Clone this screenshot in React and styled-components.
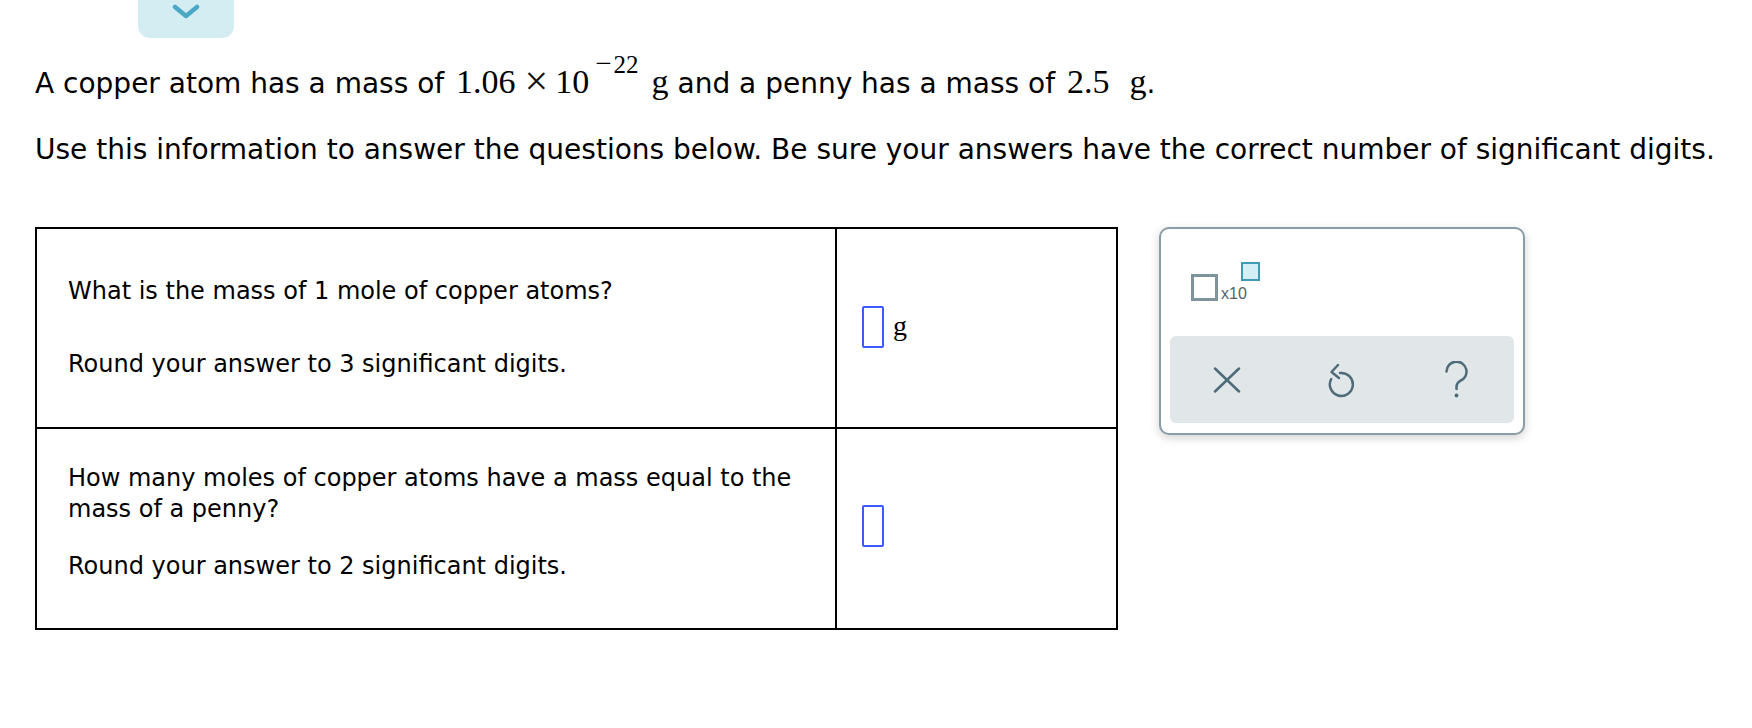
import React from "react";
import styled, { createGlobalStyle } from "styled-components";

const GlobalStyle = createGlobalStyle`
  body {
    margin: 0;
    background: #ffffff;
    font-family: "DejaVu Sans", Verdana, sans-serif;
    color: #000000;
  }
`;

const Page = styled.div`
  padding: 0 0 0 35px;
`;

const TopTab = styled.div`
  margin-left: 103px;
  width: 96px;
  height: 38px;
  box-sizing: border-box;
  padding-top: 4px;
  display: flex;
  justify-content: center;
  align-items: flex-start;
  background: #d3edf3;
  border-radius: 0 0 12px 12px;
`;

const Statement = styled.div`
  margin-top: 14px;
  font-size: 28px;
  line-height: 40px;
  white-space: nowrap;
`;

const Num = styled.span`
  font-family: "Liberation Serif", "Times New Roman", serif;
  font-size: 34px;
  line-height: 1;
  margin-left: ${(props) => props.$lead || 0}px;
`;

const Times = styled.span`
  font-family: "Liberation Serif", "Times New Roman", serif;
  font-size: 42px;
  font-weight: 300;
  line-height: 1;
  vertical-align: -2px;
  margin: 0 7px 0 9px;
  color: #111111;
`;

const Sup = styled.span`
  font-family: "Liberation Serif", "Times New Roman", serif;
  font-size: 25px;
  line-height: 1;
  vertical-align: 20px;
  margin: 0 13px 0 6px;
`;

const Minus = styled.span`
  font-size: 29px;
  line-height: 0;
  margin-right: 2px;
`;

const Instructions = styled.div`
  margin-top: 26px;
  font-size: 28px;
  line-height: 40px;
  white-space: nowrap;
`;

const Workspace = styled.div`
  display: flex;
  align-items: flex-start;
  gap: 41px;
  margin-top: 57px;
`;

const QuestionTable = styled.div`
  display: grid;
  grid-template-columns: 800px 279px;
  border: 2px solid #000000;
`;

const PromptCell = styled.div`
  box-sizing: border-box;
  height: ${(props) => (props.$first ? "198px" : "201px")};
  padding: 0 0 ${(props) => (props.$first ? "0" : "13px")} 31px;
  border-right: 2px solid #000000;
  border-top: ${(props) => (props.$first ? "none" : "2px solid #000000")};
  display: flex;
  flex-direction: column;
  justify-content: center;
  gap: ${(props) => props.$gap}px;
  font-size: 24px;
  line-height: 31px;
`;

const Prompt = styled.div`
  max-width: 750px;
`;

const AnswerCell = styled.div`
  box-sizing: border-box;
  height: ${(props) => (props.$first ? "198px" : "201px")};
  padding-left: 25px;
  border-top: ${(props) => (props.$first ? "none" : "2px solid #000000")};
  display: flex;
  align-items: center;
  gap: 9px;
`;

const AnswerBox = styled.div`
  width: 22px;
  height: 42px;
  box-sizing: border-box;
  border: 2px solid #3b5bfc;
  border-radius: 2px;
  margin-top: ${(props) => (props.$first ? "-2px" : "-6px")};
`;

const Unit = styled.span`
  font-family: "Liberation Serif", "Times New Roman", serif;
  font-size: 28px;
  line-height: 1;
  margin-top: -4px;
`;

const Keypad = styled.div`
  width: 366px;
  height: 208px;
  box-sizing: border-box;
  border: 2px solid #8a9da6;
  border-radius: 10px;
  background: #ffffff;
  box-shadow: 0 3px 10px rgba(0, 0, 0, 0.18);
  display: flex;
  flex-direction: column;
`;

const KeypadTop = styled.div`
  height: 107px;
  box-sizing: border-box;
  padding: 33px 0 0 30px;
`;

const ExpIcon = styled.div`
  display: flex;
  align-items: flex-end;
  gap: 3px;
`;

const BigSquare = styled.div`
  width: 27px;
  height: 27px;
  box-sizing: border-box;
  border: 3px solid #7f939b;
`;

const ExpStack = styled.div`
  display: flex;
  flex-direction: column;
`;

const SmallSquare = styled.div`
  align-self: flex-end;
  width: 19px;
  height: 19px;
  box-sizing: border-box;
  border: 2.5px solid #3f9ab4;
  background: #d3eef4;
  margin-right: -13px;
  margin-bottom: 5px;
`;

const ExpLabel = styled.span`
  font-family: "Liberation Sans", Arial, sans-serif;
  font-size: 16px;
  line-height: 15px;
  color: #50636c;
`;

const ActionBar = styled.div`
  margin: 0 9px;
  height: 87px;
  border-radius: 6px;
  background: #e1e6e9;
  display: grid;
  grid-template-columns: repeat(3, 1fr);
  align-items: center;
  justify-items: center;
`;

const ActionButton = styled.div`
  display: flex;
  align-items: center;
  justify-content: center;
  color: #4d6b78;
`;

function ChevronDown() {
  return (
    <svg width="30" height="16" viewBox="0 0 30 16">
      <polyline
        points="4,3 15,12 26,3"
        fill="none"
        stroke="#4aa8c6"
        strokeWidth="4.5"
        strokeLinecap="round"
        strokeLinejoin="round"
      />
    </svg>
  );
}

function ClearIcon() {
  return (
    <svg width="28" height="26" viewBox="0 0 28 26">
      <path
        d="M2 1.5 L26 24.5 M26 1.5 L2 24.5"
        stroke="currentColor"
        strokeWidth="2.5"
        strokeLinecap="round"
      />
    </svg>
  );
}

function UndoIcon() {
  return (
    <svg width="30" height="36" viewBox="0 0 30 36">
      <path
        d="M4.2 17 A11.5 11.5 0 1 0 13 11"
        fill="none"
        stroke="currentColor"
        strokeWidth="2.5"
        strokeLinecap="round"
      />
      <polyline
        points="11,3 4.5,10 12,16"
        fill="none"
        stroke="currentColor"
        strokeWidth="2.5"
        strokeLinecap="round"
        strokeLinejoin="round"
      />
    </svg>
  );
}

function HelpIcon() {
  return (
    <svg width="28" height="38" viewBox="0 0 28 38">
      <path
        d="M3.5 10.5 A10 10 0 1 1 17 20 Q13.5 22 13.5 26 V28"
        fill="none"
        stroke="currentColor"
        strokeWidth="2.5"
        strokeLinecap="round"
      />
      <circle cx="13.5" cy="34.5" r="1.9" fill="currentColor" />
    </svg>
  );
}

const questions = [
  {
    id: "mass",
    prompt: "What is the mass of 1 mole of copper atoms?",
    round: "Round your answer to 3 significant digits.",
    unit: "g",
    gap: 42,
  },
  {
    id: "moles",
    prompt:
      "How many moles of copper atoms have a mass equal to the mass of a penny?",
    round: "Round your answer to 2 significant digits.",
    unit: null,
    gap: 26,
  },
];

export default function App() {
  return (
    <>
      <GlobalStyle />
      <Page>
        <TopTab>
          <ChevronDown />
        </TopTab>
        <Statement>
          A copper atom has a mass of <Num $lead={3}>1.06</Num>
          <Times>×</Times>
          <Num>10</Num>
          <Sup>
            <Minus>−</Minus>22
          </Sup>
          <Num>g</Num> and a penny has a mass of <Num $lead={3}>2.5</Num>
          <Num $lead={20}>g</Num>.
        </Statement>
        <Instructions>
          Use this information to answer the questions below. Be sure your
          answers have the correct number of significant digits.
        </Instructions>
        <Workspace>
          <QuestionTable>
            {questions.map((q, i) => (
              <React.Fragment key={q.id}>
                <PromptCell $first={i === 0} $gap={q.gap}>
                  <Prompt>{q.prompt}</Prompt>
                  <Prompt>{q.round}</Prompt>
                </PromptCell>
                <AnswerCell $first={i === 0}>
                  <AnswerBox $first={i === 0} />
                  {q.unit && <Unit>{q.unit}</Unit>}
                </AnswerCell>
              </React.Fragment>
            ))}
          </QuestionTable>
          <Keypad>
            <KeypadTop>
              <ExpIcon>
                <BigSquare />
                <ExpStack>
                  <SmallSquare />
                  <ExpLabel>x10</ExpLabel>
                </ExpStack>
              </ExpIcon>
            </KeypadTop>
            <ActionBar>
              <ActionButton>
                <ClearIcon />
              </ActionButton>
              <ActionButton>
                <UndoIcon />
              </ActionButton>
              <ActionButton>
                <HelpIcon />
              </ActionButton>
            </ActionBar>
          </Keypad>
        </Workspace>
      </Page>
    </>
  );
}
